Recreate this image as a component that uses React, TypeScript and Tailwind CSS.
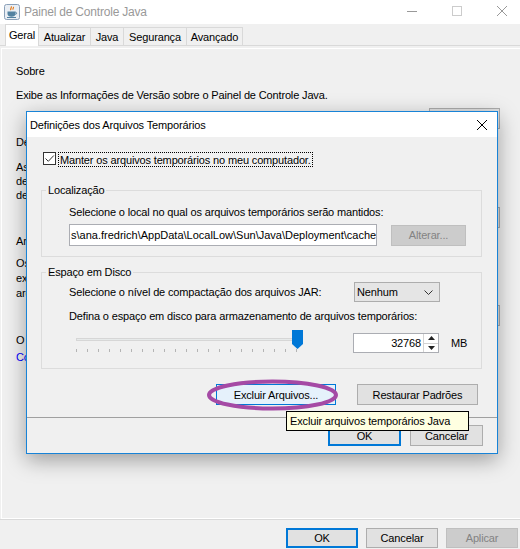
import React from "react";

// Segoe UI não existe aqui: Liberation Sans 11px com tracking negativo chega perto da largura
const FONT = "font-['Liberation_Sans',Arial,sans-serif] text-[11px] tracking-[-0.15px]";

function JavaIcon() {
  return (
    <svg width="16" height="16" viewBox="0 0 16 16" className="ml-[4px] shrink-0">
      <rect x="0.5" y="0.5" width="15" height="15" rx="2" fill="#e9eef4" stroke="#8aa0b8" />
      <path d="M7 2.5c1.5 1.2-1.5 2 0 3.6M9.2 3c1 .9-1 1.5 0 2.6" stroke="#e76f00" strokeWidth="1.1" fill="none" />
      <path d="M3.5 7.5h8v2.3c0 1.8-1.6 3-4 3s-4-1.2-4-3z" fill="#5382a1" />
      <path d="M11.4 8.2c1.6 0 1.6 2.2 0 2.2" stroke="#5382a1" strokeWidth="1" fill="none" />
      <path d="M3 13.5h9" stroke="#5382a1" strokeWidth="1" />
    </svg>
  );
}

function TitleBar() {
  return (
    <div className="flex h-[24px] shrink-0 items-center bg-white">
      <JavaIcon />
      <span className="ml-[4px] text-[12px] tracking-[-0.2px] text-[#999999]">Painel de Controle Java</span>
      <div className="mb-[2px] ml-auto mr-[13px] flex items-center gap-[35px]">
        <svg width="10" height="10" viewBox="0 0 10 10">
          <path d="M0 5.5h10" stroke="#999999" />
        </svg>
        <svg width="10" height="10" viewBox="0 0 10 10">
          <rect x="0.5" y="0.5" width="9" height="9" fill="none" stroke="#cccccc" />
        </svg>
        <svg width="10" height="10" viewBox="0 0 10 10">
          <path d="M0 0l10 10M10 0L0 10" stroke="#999999" />
        </svg>
      </div>
    </div>
  );
}

const tabs = [
  { label: "Atualizar", w: "w-[52px]" },
  { label: "Java", w: "w-[33px]" },
  { label: "Segurança", w: "w-[63px]" },
  { label: "Avançado", w: "w-[56px]" },
];

function TabStrip() {
  return (
    <div className="flex h-[22px] shrink-0 items-end border-b border-[#d9d9d9] pl-[5px]">
      <div className="relative z-10 -mb-px flex h-[22px] w-[34px] items-center justify-center border-x border-t border-[#d9d9d9] bg-white pb-[2px]">
        Geral
      </div>
      {tabs.map((t) => (
        <div
          key={t.label}
          className={`flex h-[18px] items-center justify-center border-r border-t border-[#d9d9d9] ${t.w}`}
        >
          {t.label}
        </div>
      ))}
    </div>
  );
}

function Btn({
  children,
  className = "",
}: {
  children?: React.ReactNode;
  className?: string;
}) {
  return (
    <button
      type="button"
      className={`flex h-[21px] items-center justify-center border border-[#adadad] bg-[#e1e1e1] ${className}`}
    >
      {children}
    </button>
  );
}

function GeneralPanel() {
  return (
    <div className="shrink-0 border-b border-[#d9d9d9]">
      <div className="ml-[1px] mt-[2px] flex h-[471px] flex-col overflow-hidden whitespace-nowrap border-b border-l border-t border-white pl-[14px] pr-[20px] pt-[14px]">
        <div>Sobre</div>
        <div className="mt-[8px]">Exibe as Informações de Versão sobre o Painel de Controle Java.</div>
        <div className="mt-[5px] flex justify-end">
          <Btn className="w-[71px]">Sobre...</Btn>
        </div>
        <div className="mt-[5px]">Definições de Rede</div>
        <div className="mt-[10px] leading-[14px]">
          <div>As definições de rede são usadas ao estabelecer conexões</div>
          <div>de Internet. Por padrão, o Java usará as definições de rede</div>
          <div>de seu web browser.</div>
        </div>
        <div className="mt-[5px] flex justify-end">
          <Btn className="w-[71px]">Definições...</Btn>
        </div>
        <div className="mt-[5px]">Arquivos Temporários de Internet</div>
        <div className="mt-[7px] leading-[15px]">
          <div>Os arquivos que você usa em aplicações Java são armazenados</div>
          <div>execução rápida posterior. Somente usuários avançados</div>
          <div>arquivos ou modificar essas definições.</div>
        </div>
        <div className="mt-[4px] flex justify-end gap-[8px]">
          <Btn className="w-[71px]">Definições...</Btn>
          <Btn className="w-[71px]">Exibir...</Btn>
        </div>
        <div className="mt-[6px]">O Java no browser está ativado.</div>
        <div className="mt-[1px] text-[#0000ff]">Consulte a guia Segurança</div>
      </div>
    </div>
  );
}

function Footer() {
  return (
    <div className="flex h-[29px] shrink-0 justify-end gap-[8px] pr-[2px] pt-[8px]">
      <button type="button" className="flex h-[20px] w-[72px] items-center justify-center border-2 border-[#0078d7] bg-[#e1e1e1]">
        OK
      </button>
      <button type="button" className="flex h-[20px] w-[72px] items-center justify-center border border-[#adadad] bg-[#e1e1e1]">
        Cancelar
      </button>
      <button type="button" className="flex h-[20px] w-[72px] items-center justify-center border border-[#bfbfbf] bg-[#cccccc] text-[#838383]">
        Aplicar
      </button>
    </div>
  );
}

function GroupBox({
  title,
  className = "",
  children,
}: {
  title: string;
  className?: string;
  children: React.ReactNode;
}) {
  return (
    <div className={`relative ml-[14px] mr-[15px] border border-[#dcdcdc] pl-[27px] ${className}`}>
      <span className="absolute -top-[9px] left-[4px] bg-[#f0f0f0] px-[2px]">{title}</span>
      {children}
    </div>
  );
}

function Slider() {
  const ticks = Array.from({ length: 21 }, (_, i) => 7.5 + i * 11);
  return (
    <svg width="284" height="23" viewBox="0 0 284 23" className="shrink-0">
      <rect x="7.5" y="8.5" width="224" height="2" fill="#e7eaea" stroke="#d6d6d6" />
      {ticks.map((x) => (
        <path key={x} d={`M${x} 19v3`} stroke="#b4b4b4" />
      ))}
      <path d="M223 0H234V14L228.5 19L223 14Z" fill="#0078d7" />
    </svg>
  );
}

function TempFilesDialog() {
  return (
    <div className="absolute left-[26px] top-[111px] flex h-[343px] w-[472px] flex-col whitespace-nowrap border border-[#1883d7] bg-[#f0f0f0] shadow-[0_6px_20px_rgba(0,0,0,0.35)]">
      <div className="flex h-[25px] shrink-0 items-center bg-white pl-[3px]">
        <span>Definições dos Arquivos Temporários</span>
        <svg width="10" height="10" viewBox="0 0 10 10" className="ml-auto mr-[10px]">
          <path d="M0 0l10 10M10 0L0 10" stroke="#000" />
        </svg>
      </div>

      <div className="ml-[16px] mt-[15px] flex items-start">
        <span className="flex h-[13px] w-[13px] items-center justify-center border border-[#333333] bg-white">
          <svg width="11" height="11" viewBox="0 0 11 11">
            <path d="M1.5 5.5l2.8 2.8L9.8 2.5" stroke="#333333" fill="none" />
          </svg>
        </span>
        <span className="ml-[2px] flex h-[15px] items-center border border-dotted border-black px-[1px]">
          Manter os arquivos temporários no meu computador.
        </span>
      </div>

      <GroupBox title="Localização" className="mt-[23px] h-[67px] pt-[13px]">
        <div>Selecione o local no qual os arquivos temporários serão mantidos:</div>
        <div className="mt-[4px] flex items-center">
          {/* campo rolado até o fim do caminho */}
          <div className="flex h-[22px] w-[308px] items-center overflow-hidden border border-[#abadb3] bg-white pl-[1px] tracking-normal">
            s\ana.fredrich\AppData\LocalLow\Sun\Java\Deployment\cache
          </div>
          <button type="button" className="ml-[14px] flex h-[21px] w-[75px] items-center justify-center border border-[#bfbfbf] bg-[#cccccc] text-[#838383]">
            Alterar...
          </button>
        </div>
      </GroupBox>

      <GroupBox title="Espaço em Disco" className="mt-[15px] h-[97px] pt-[9px]">
        <div className="flex h-[20px] items-center">
          <span className="w-[285px]">Selecione o nível de compactação dos arquivos JAR:</span>
          <div className="flex h-[20px] w-[86px] items-center border border-[#adadad] bg-[#e5e5e5] pl-[2px] pr-[6px]">
            <span>Nenhum</span>
            <svg width="9" height="5" viewBox="0 0 9 5" className="ml-auto">
              <path d="M0.5 0.5L4.5 4.5L8.5 0.5" stroke="#333" fill="none" />
            </svg>
          </div>
        </div>
        <div className="mt-[6px]">Defina o espaço em disco para armazenamento de arquivos temporários:</div>
        <div className="mt-[6px] flex items-start">
          <Slider />
          <div className="mt-[3px] flex h-[20px] w-[86px] border border-[#abadb3] bg-white">
            <span className="flex flex-1 items-center justify-end pr-[2px]">32768</span>
            <div className="flex w-[15px] flex-col border-l border-[#d4d4d4]">
              <span className="flex flex-1 items-center justify-center border-b border-[#d4d4d4]">
                <svg width="7" height="4" viewBox="0 0 7 4">
                  <path d="M0 4L3.5 0L7 4Z" fill="#222" />
                </svg>
              </span>
              <span className="flex flex-1 items-center justify-center">
                <svg width="7" height="4" viewBox="0 0 7 4">
                  <path d="M0 0L3.5 4L7 0Z" fill="#222" />
                </svg>
              </span>
            </div>
          </div>
          <span className="ml-[12px] mt-[3px] flex h-[20px] items-center">MB</span>
        </div>
      </GroupBox>

      <div className="mt-[15px] flex justify-end gap-[21px] pr-[19px]">
        <button type="button" className="flex h-[21px] w-[120px] items-center justify-center border border-[#0078d7] bg-[#e5f1fb]">
          Excluir Arquivos...
        </button>
        <Btn className="w-[121px]">Restaurar Padrões</Btn>
      </div>

      <div className="mt-[12px] border-t border-[#a0a0a0]" />

      <div className="mt-[7px] flex justify-end gap-[9px] pr-[14px]">
        <button type="button" className="flex h-[21px] w-[73px] items-center justify-center border-2 border-[#0078d7] bg-[#e1e1e1]">
          OK
        </button>
        <Btn className="w-[73px]">Cancelar</Btn>
      </div>
    </div>
  );
}

export default function App() {
  return (
    <div className={`relative flex h-[549px] w-[520px] flex-col overflow-hidden bg-[#f0f0f0] leading-[16px] text-black ${FONT}`}>
      <TitleBar />
      <TabStrip />
      <GeneralPanel />
      <Footer />
      <TempFilesDialog />

      {/* marcação roxa em volta do botão */}
      <svg
        width="136"
        height="35"
        viewBox="0 0 136 35"
        className="pointer-events-none absolute left-[205px] top-[378px]"
      >
        <ellipse cx="67.5" cy="17" rx="63.5" ry="13.5" fill="none" stroke="#a54aa5" strokeWidth="4" />
      </svg>

      <div className="absolute left-[286px] top-[411px] flex h-[20px] w-[183px] items-center whitespace-nowrap border border-black bg-[#ffffe1] pl-[3px]">
        Excluir arquivos temporários Java
      </div>
    </div>
  );
}
